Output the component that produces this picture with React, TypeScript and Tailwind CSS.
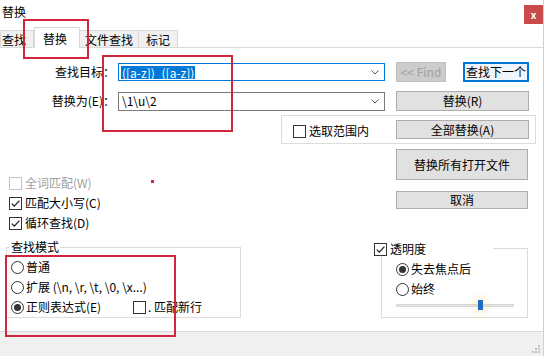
import React from "react";

const Check = ({ checked = false, disabled = false }: { checked?: boolean; disabled?: boolean }) => (
  <span
    className={`inline-flex shrink-0 items-center justify-center w-[13px] h-[13px] border bg-white ${
      disabled ? "border-[#c4c4c4]" : "border-[#333333]"
    }`}
  >
    {checked && (
      <svg width="11" height="11" viewBox="0 0 11 11">
        <path d="M1.8 5.6 L4.3 8.1 L9.4 2.6" fill="none" stroke="#222" strokeWidth="1.3" />
      </svg>
    )}
  </span>
);

const Radio = ({ checked = false }: { checked?: boolean }) => (
  <span className="inline-flex shrink-0 items-center justify-center w-[13px] h-[13px] rounded-full border border-[#333333] bg-white">
    {checked && <span className="w-[7px] h-[7px] rounded-full bg-[#333333]" />}
  </span>
);

const Btn = ({ children, className = "" }: { children: React.ReactNode; className?: string }) => (
  <div
    className={`flex items-center justify-center border border-[#adadad] bg-[#e1e1e1] text-black ${className}`}
  >
    {children}
  </div>
);

export default function App() {
  return (
    <div className="relative w-[550px] h-[356px] overflow-hidden bg-white flex text-[12px] leading-[14px] text-black font-['Noto_Sans_CJK_SC','Noto_Sans',sans-serif]">
      <div className="w-[544px] h-full border-r border-[#d0d0d0] flex flex-col">
        {/* title bar */}
        <div className="h-[27px] flex items-start justify-between">
          <span className="ml-[2px] mt-[5px]">替换</span>
          <div className="mt-[5px] w-[19px] h-[19px] bg-[#c94a4a] flex items-center justify-center text-white text-[10px] font-bold leading-none">
            x
          </div>
        </div>
        {/* tabs */}
        <div className="h-[20px] flex items-end">
          <div className="w-[34px] h-[17px] bg-[#f0f0f0] border border-b-0 border-[#d9d9d9] pt-[2px] pl-[1px]">查找</div>
          <div className="relative z-10 w-[46px] h-[21px] -mb-[1px] bg-white border border-b-0 border-[#d9d9d9] pt-[4px] pl-[8px]">
            替换
          </div>
          <div className="w-[59px] h-[17px] bg-[#f0f0f0] border border-b-0 border-l-0 border-[#d9d9d9] pt-[2px] text-center">
            文件查找
          </div>
          <div className="w-[39px] h-[17px] bg-[#f0f0f0] border border-b-0 border-l-0 border-[#d9d9d9] pt-[2px] text-center">
            标记
          </div>
        </div>
        {/* panel */}
        <div className="flex-1 border-t border-[#d9d9d9] flex flex-col">
          {/* row 1 */}
          <div className="mt-[14px] h-[20px] flex items-center">
            <span className="w-[115px] text-right">查找目标：</span>
            <div className="ml-[3px] w-[267px] h-[18px] border border-[#0078d7] flex items-center pl-[2px] pr-[5px]">
              <span className="bg-[#0078d7] text-white px-[1px] leading-[13px]">([a-z])_([a-z])</span>
              <svg className="ml-auto" width="8" height="5" viewBox="0 0 8 5">
                <path d="M0.5 0.5 L4 4 L7.5 0.5" fill="none" stroke="#555" strokeWidth="1" />
              </svg>
            </div>
            <div className="ml-[11px] w-[50px] h-[20px] border border-[#bfbfbf] bg-[#cccccc] text-[#a0a0a0] flex items-center justify-center">
              &lt;&lt; Find
            </div>
            <div className="ml-[17px] w-[66px] h-[20px] border-2 border-[#0078d7] bg-[#eef5fc] flex items-center justify-center">
              查找下一个
            </div>
          </div>
          {/* row 2 */}
          <div className="mt-[8px] h-[22px] flex items-center">
            <span className="w-[115px] text-right">替换为(E)：</span>
            <div className="ml-[3px] w-[267px] h-[19px] border border-[#7a7a7a] flex items-center pl-[3px] pr-[5px]">
              <span>\1\u\2</span>
              <svg className="ml-auto" width="8" height="5" viewBox="0 0 8 5">
                <path d="M0.5 0.5 L4 4 L7.5 0.5" fill="none" stroke="#555" strokeWidth="1" />
              </svg>
            </div>
            <Btn className="ml-[11px] w-[133px] h-[20px]">替换(R)</Btn>
          </div>
          {/* row 3 */}
          <div className="mt-[3px] h-[29px] flex">
            <div className="ml-[281px] w-[255px] h-[29px] border border-[#dcdcdc] flex items-center">
              <span className="ml-[11px] mt-[3px] flex items-center gap-[3px]">
                <Check />
                <span>选取范围内</span>
              </span>
              <Btn className="ml-auto mr-[6px] w-[133px] h-[19px]">全部替换(A)</Btn>
            </div>
          </div>
          {/* row 4 */}
          <div className="h-[96px] flex justify-between">
            <div className="pl-[9px] pt-[29px] flex flex-col">
              <div className="h-[20px] flex items-center gap-[3px] text-[#a0a0a0]">
                <Check disabled />
                <span>全词匹配(W)</span>
              </div>
              <div className="h-[20px] flex items-center gap-[3px]">
                <Check checked />
                <span>匹配大小写(C)</span>
              </div>
              <div className="h-[20px] flex items-center gap-[3px]">
                <Check checked />
                <span>循环查找(D)</span>
              </div>
            </div>
            <div className="mr-[15px] flex flex-col">
              <Btn className="mt-[5px] w-[132px] h-[31px]">替换所有打开文件</Btn>
              <Btn className="mt-[11px] w-[132px] h-[18px]">取消</Btn>
            </div>
          </div>
          {/* row 5 */}
          <div className="flex items-start">
            <div className="relative ml-[6px] mt-[7px] w-[235px] h-[71px] border border-[#dcdcdc] pt-[9px] pl-[4px]">
              <span className="absolute -top-[8px] left-[3px] bg-white px-[1px]">查找模式</span>
              <div className="h-[20px] flex items-center gap-[2px]">
                <Radio />
                <span>普通</span>
              </div>
              <div className="h-[20px] flex items-center gap-[2px]">
                <Radio />
                <span>扩展 (\n, \r, \t, \0, \x...)</span>
              </div>
              <div className="h-[20px] flex items-center">
                <div className="w-[122px] flex items-center gap-[2px]">
                  <Radio checked />
                  <span>正则表达式(E)</span>
                </div>
                <Check />
                <span className="ml-[2px]">. 匹配新行</span>
              </div>
            </div>
            <div className="relative ml-[140px] mt-[8px] w-[147px] h-[70px] border border-[#dcdcdc] pt-[10px] pl-[14px]">
              <div className="absolute -top-[7px] -left-[8px] w-[119px] h-[14px] bg-white flex items-center gap-[3px]">
                <Check checked />
                <span>透明度</span>
              </div>
              <div className="h-[20px] flex items-center gap-[2px]">
                <Radio checked />
                <span>失去焦点后</span>
              </div>
              <div className="h-[20px] flex items-center gap-[2px]">
                <Radio />
                <span>始终</span>
              </div>
              <div className="relative w-[118px] h-[12px] flex items-center">
                <div className="w-full h-[3px] bg-[#e7e7e7] border border-[#d6d6d6]" />
                <div className="absolute left-[82px] top-[1px] w-[5px] h-[10px] bg-[#1a6fc4] shadow-[0_0_6px_3px_rgba(255,210,140,0.35)]" />
              </div>
            </div>
          </div>
        </div>
        {/* status bar */}
        <div className="h-[25px] bg-[#f0f0f0] border-t border-[#dadada] flex items-end justify-end pr-[3px] pb-[3px]">
          <svg width="8" height="8" viewBox="0 0 8 8">
            <rect x="6" y="0" width="2" height="2" fill="#c2c2c2" />
            <rect x="3" y="3" width="2" height="2" fill="#c2c2c2" />
            <rect x="6" y="3" width="2" height="2" fill="#c2c2c2" />
            <rect x="0" y="6" width="2" height="2" fill="#c2c2c2" />
            <rect x="3" y="6" width="2" height="2" fill="#c2c2c2" />
            <rect x="6" y="6" width="2" height="2" fill="#c2c2c2" />
          </svg>
        </div>
      </div>
      <div className="flex-1 bg-white" />

      {/* red annotations */}
      <div className="absolute left-[23px] top-[19px] w-[66px] h-[40px] border-2 border-[#d0253a]" />
      <div className="absolute left-[102px] top-[55px] w-[131px] h-[77px] border-2 border-[#d0253a]" />
      <div className="absolute left-[5px] top-[255px] w-[171px] h-[82px] border-2 border-[#d0253a]" />
      <div className="absolute left-[151px] top-[180px] w-[3px] h-[3px] bg-[#d0253a]" />
    </div>
  );
}
